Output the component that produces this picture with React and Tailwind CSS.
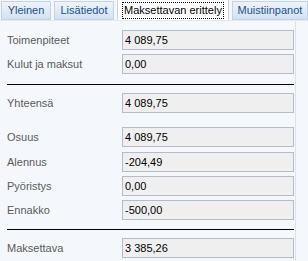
import React from "react";

const font = { fontFamily: '"Liberation Sans", Arial, sans-serif' };

function Field({ label, value, mt }) {
  return (
    <div className={`flex items-center ${mt}`}>
      <div className="w-[115px] text-[11px] text-[#5a5a5a] leading-none">{label}</div>
      <div className="w-[172px] h-[20px] border border-[#b3bdc9] bg-[#efefef] flex items-center pl-[2px] text-[11px] text-black leading-none">
        {value}
      </div>
    </div>
  );
}

function Line({ mt }) {
  return <div className={`${mt} h-px w-[287px] bg-black`} />;
}

export default function App() {
  return (
    <div className="w-[308px] h-[261px] bg-[#f4f8fd] overflow-hidden" style={font}>
      <div className="flex items-end h-[21px] pl-[1px] gap-[3px] border-b border-[#e2e9f2]">
        <div className="w-[50px] h-[19px] flex items-center justify-center border border-[#c2d3e8] bg-gradient-to-b from-[#eef4fb] to-[#d2e1f2] text-[11px] text-[#1f4f8e] leading-none">
          Yleinen
        </div>
        <div className="w-[60px] h-[19px] flex items-center justify-center border border-[#c2d3e8] bg-gradient-to-b from-[#eef4fb] to-[#d2e1f2] text-[11px] text-[#1f4f8e] leading-none">
          Lisätiedot
        </div>
        <div className="w-[112px] h-[21px] flex items-center justify-center border border-b-0 border-[#c9d3de] bg-white text-[11px] text-black leading-none">
          <span className="border border-dotted border-black px-[1px] py-[2px]">Maksettavan erittely</span>
        </div>
        <div className="w-[76px] h-[19px] flex items-center justify-center border border-[#c2d3e8] bg-gradient-to-b from-[#eef4fb] to-[#d2e1f2] text-[11px] text-[#1f4f8e] leading-none">
          Muistiinpanot
        </div>
      </div>
      <div className="flex">
        <div className="flex flex-col pl-[7px] w-[296px] h-[240px] border-r border-[#dbe3ed]">
          <Field label="Toimenpiteet" value="4 089,75" mt="mt-[9px]" />
          <Field label="Kulut ja maksut" value="0,00" mt="mt-[4px]" />
          <Line mt="mt-[10px]" />
          <Field label="Yhteensä" value="4 089,75" mt="mt-[8px]" />
          <Field label="Osuus" value="4 089,75" mt="mt-[14px]" />
          <Field label="Alennus" value="-204,49" mt="mt-[5px]" />
          <Field label="Pyöristys" value="0,00" mt="mt-[4px]" />
          <Field label="Ennakko" value="-500,00" mt="mt-[4px]" />
          <Line mt="mt-[9px]" />
          <Field label="Maksettava" value="3 385,26" mt="mt-[8px]" />
        </div>
      </div>
    </div>
  );
}
